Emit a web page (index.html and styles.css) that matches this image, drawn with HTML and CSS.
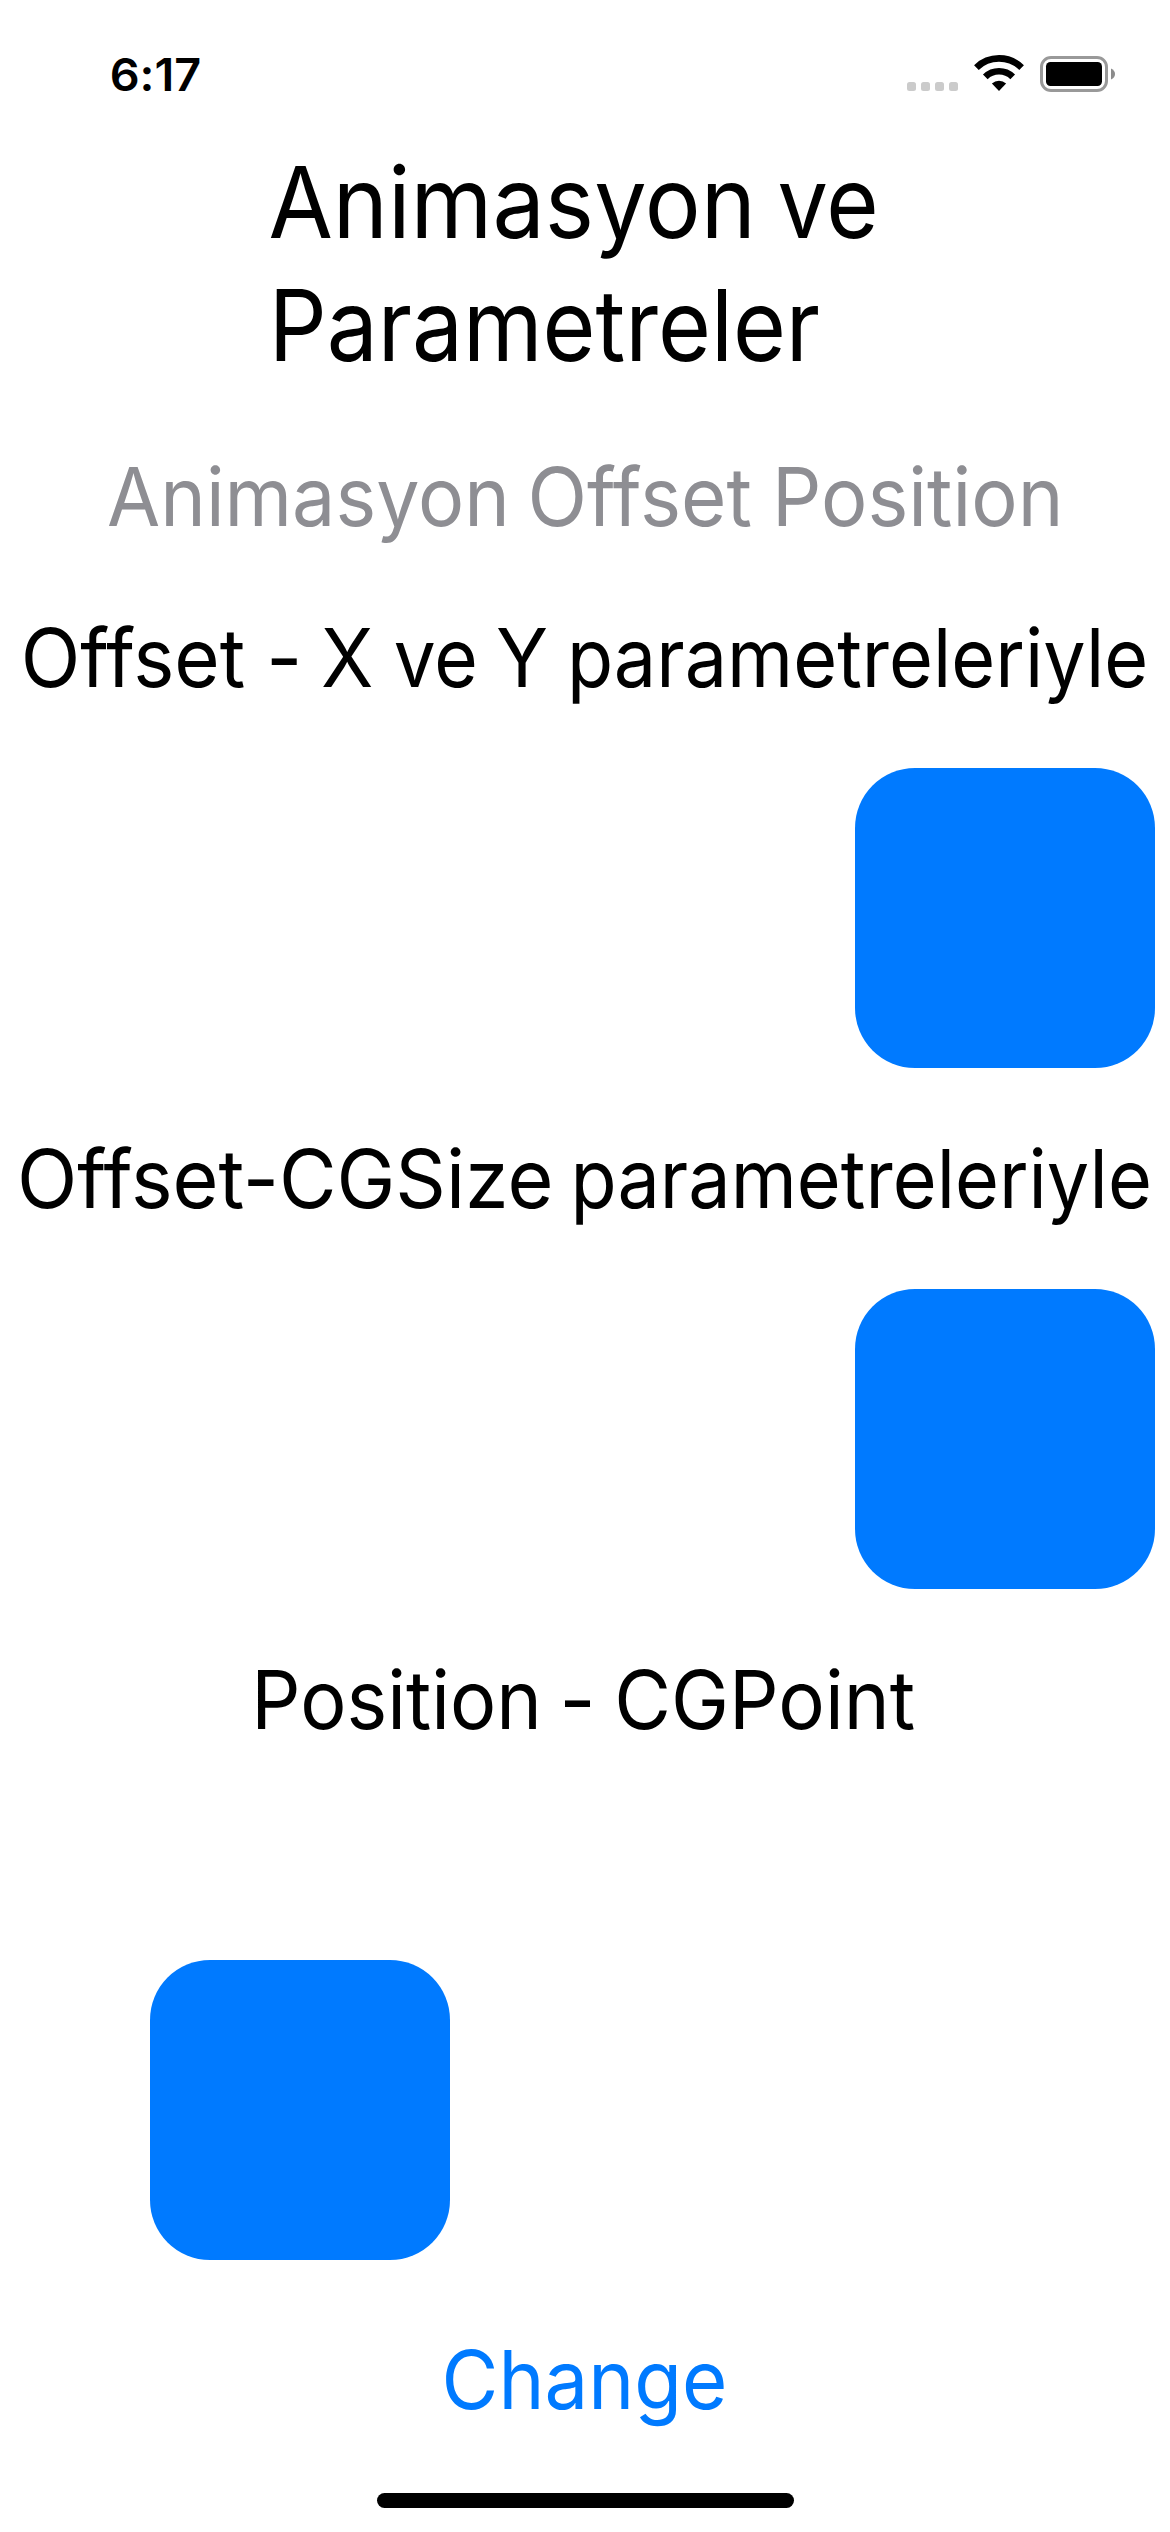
FILE: index.html
```html
<!DOCTYPE html>
<html lang="tr">
<head>
<meta charset="utf-8">
<title>Animasyon ve Parametreler</title>
<link rel="stylesheet" href="styles.css">
</head>
<body>
<div class="screen">
  <header class="status">
    <svg class="time" width="130" height="60"><text x="9.7" y="51" textLength="91.6" lengthAdjust="spacingAndGlyphs">6:17</text></svg>
    <svg class="indicators" width="210" height="44" viewBox="906 52 210 44">
      <g fill="#cbcbcb">
        <rect x="907" y="82" width="9" height="9" rx="2.5"/>
        <rect x="921" y="82" width="9" height="9" rx="2.5"/>
        <rect x="935" y="82" width="9" height="9" rx="2.5"/>
        <rect x="949" y="82" width="9" height="9" rx="2.5"/>
      </g>
      <g fill="none" stroke="#000" stroke-width="6.7">
        <path d="M976.400 67.600A32.500 32.500 0 0 1 1021.600 67.600"/>
        <path d="M985.300 76.800A19.700 19.700 0 0 1 1012.700 76.800"/>
      </g>
      <path d="M991.900 83.600A10.300 10.300 0 0 1 1006.100 83.600L999 91Z"/>
      <rect x="1041.500" y="57.500" width="65" height="33" rx="9.500" fill="none" stroke="#999" stroke-width="3"/>
      <rect x="1046" y="62" width="56" height="24" rx="4.500"/>
      <path d="M1111 68.500Q1115 70.500 1115 74Q1115 77.500 1111 79.500Z" fill="#8c8c8c"/>
    </svg>
  </header>
  <main class="stack">
    <h1 class="title">
      <svg width="1170" height="246">
        <text x="268.400" y="97" textLength="487.6" lengthAdjust="spacingAndGlyphs">Animasyon</text>
        <text x="777.600" y="97" textLength="101.2" lengthAdjust="spacingAndGlyphs">ve</text>
        <text x="268.700" y="220" textLength="551.4" lengthAdjust="spacingAndGlyphs">Parametreler</text>
      </svg>
    </h1>
    <svg class="line tall subtitle">
      <text x="107.100" y="79" textLength="402.7" lengthAdjust="spacingAndGlyphs">Animasyon</text>
      <text x="527.500" y="79" textLength="224.5" lengthAdjust="spacingAndGlyphs">Offset</text>
      <text x="772" y="79" textLength="291.4" lengthAdjust="spacingAndGlyphs">Position</text>
    </svg>
    <svg class="line">
      <text x="20.800" y="79" textLength="224.5" lengthAdjust="spacingAndGlyphs">Offset</text>
      <text x="266.200" y="79" textLength="36" lengthAdjust="spacingAndGlyphs">-</text>
      <text x="321.100" y="79" textLength="52.4" lengthAdjust="spacingAndGlyphs">X</text>
      <text x="393.700" y="79" textLength="84.1" lengthAdjust="spacingAndGlyphs">ve</text>
      <text x="496" y="79" textLength="52.1" lengthAdjust="spacingAndGlyphs">Y</text>
      <text x="566.900" y="79" textLength="581.4" lengthAdjust="spacingAndGlyphs">parametreleriyle</text>
    </svg>
    <div class="box end"></div>
    <svg class="line tall">
      <text x="17.100" y="80" textLength="536.3" lengthAdjust="spacingAndGlyphs">Offset-CGSize</text>
      <text x="570.500" y="80" textLength="581.4" lengthAdjust="spacingAndGlyphs">parametreleriyle</text>
    </svg>
    <div class="box end"></div>
    <svg class="line">
      <text x="251.300" y="80" textLength="290.5" lengthAdjust="spacingAndGlyphs">Position</text>
      <text x="559.400" y="80" textLength="36" lengthAdjust="spacingAndGlyphs">-</text>
      <text x="614.200" y="80" textLength="301" lengthAdjust="spacingAndGlyphs">CGPoint</text>
    </svg>
    <div class="area"><div class="box"></div></div>
    <button class="change" type="button">
      <svg class="line"><text x="441.500" y="80" textLength="285.8" lengthAdjust="spacingAndGlyphs">Change</text></svg>
    </button>
  </main>
  <div class="home"></div>
</div>
</body>
</html>
```
FILE: styles.css
```css
body {
  margin: 0;
  background: #fff;
  color: #000;
  font-family: Inter, "Liberation Sans", sans-serif;
}

svg {
  display: block;
  overflow: visible;
  fill: currentColor;
  font-variant-ligatures: none;
}

.screen {
  display: flex;
  flex-direction: column;
  width: 1170px;
  height: 2532px;
}

.status {
  display: flex;
  justify-content: space-between;
  align-items: flex-start;
  box-sizing: border-box;
  height: 141px;
  padding: 40px 54px 0 100px;
}

.time {
  font-size: 45px;
  font-weight: 600;
}

.indicators {
  margin-top: 12px;
}

.stack {
  display: flex;
  flex-direction: column;
  gap: 60px;
}

.title {
  margin: 0;
  font-size: 99px;
  font-weight: 400;
}

.line {
  width: 1170px;
  height: 100px;
  font-size: 81.5px;
}

.tall {
  height: 101px;
}

.subtitle {
  color: #8e8e93;
}

.box {
  width: 300px;
  height: 300px;
  border-radius: 60px;
  background: #007aff;
}

.end {
  align-self: flex-end;
  margin-right: 15px;
}

.area {
  box-sizing: border-box;
  height: 460px;
  padding: 151px 0 0 150px;
}

.change {
  padding: 0;
  border: 0;
  background: none;
  color: #007aff;
  font: inherit;
}

.home {
  width: 417px;
  height: 15px;
  margin: 64px 0 0 377px;
  border-radius: 8px;
  background: #000;
}
```
